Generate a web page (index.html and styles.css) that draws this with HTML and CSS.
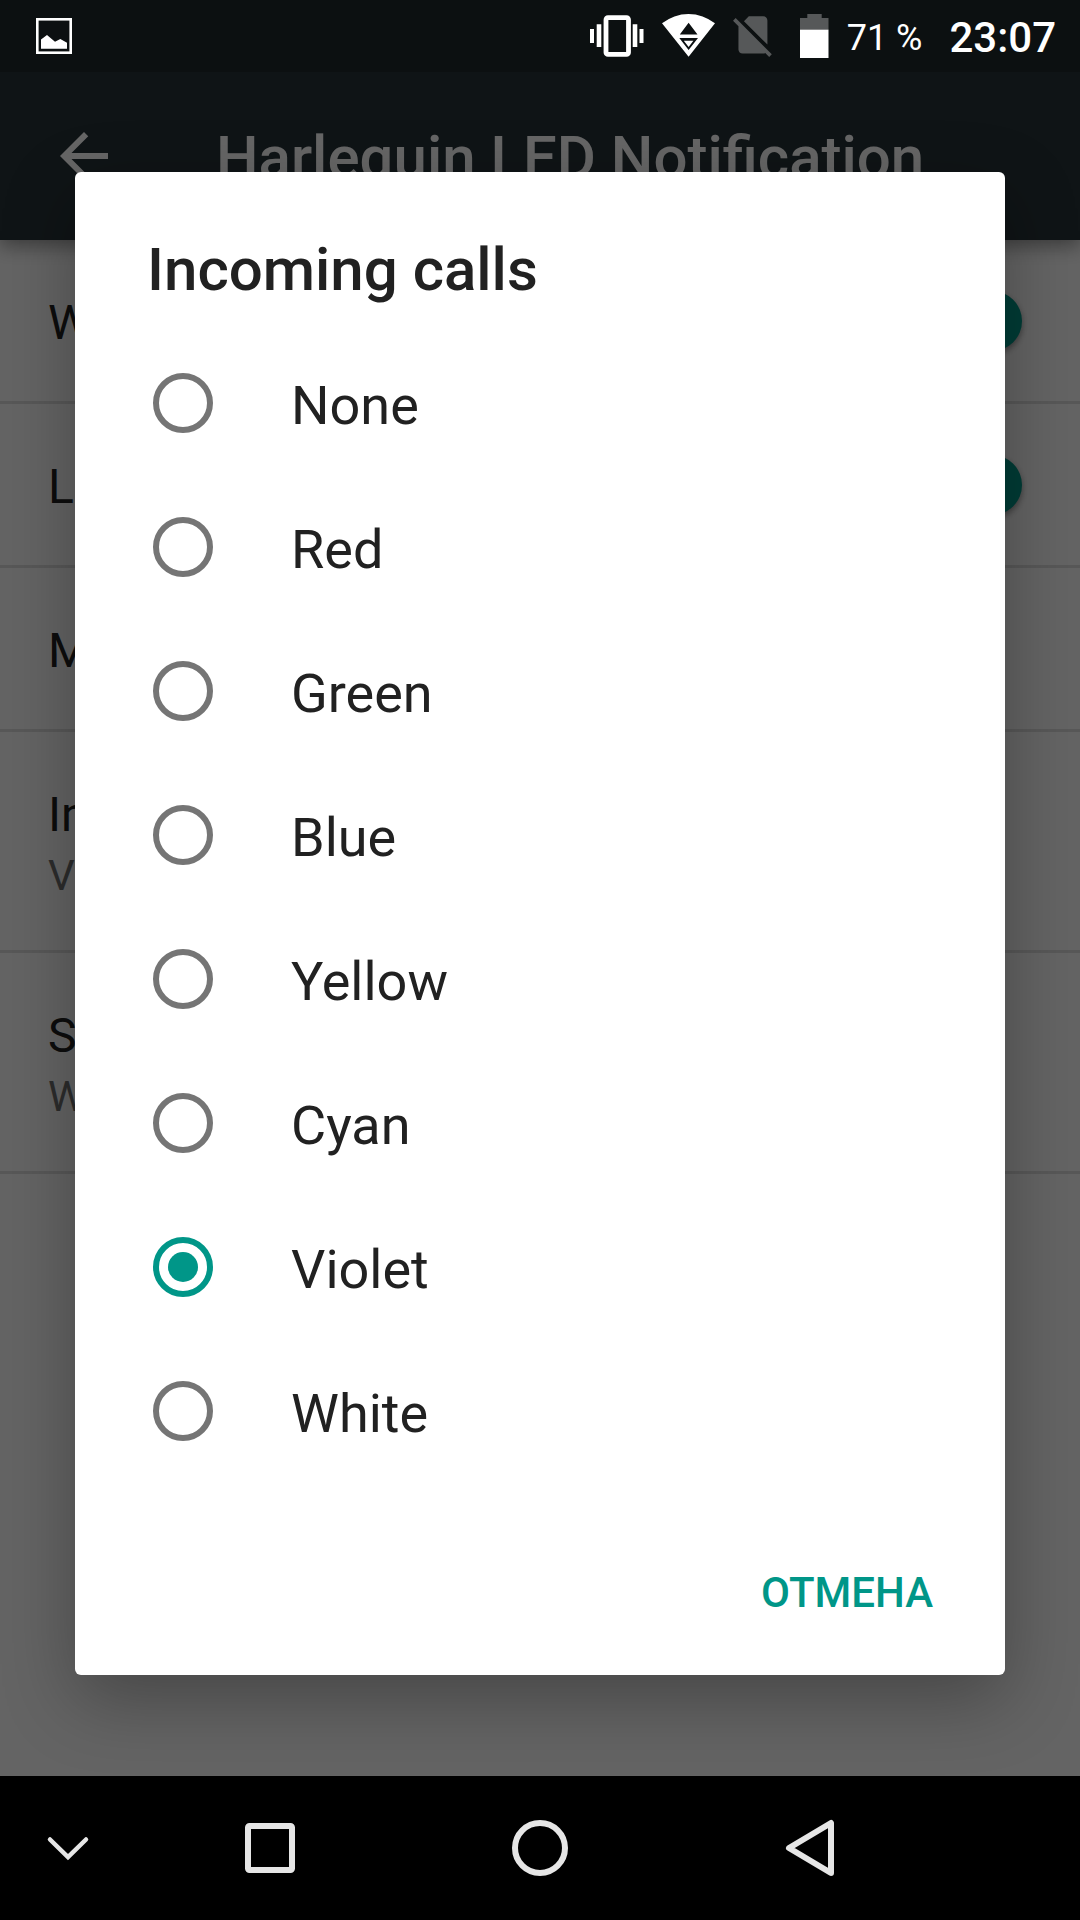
FILE: index.html
```html
<!DOCTYPE html>
<html lang="en">
<head>
  <meta charset="utf-8">
  <meta name="viewport" content="width=device-width, initial-scale=1">
  <title>Harlequin LED Notification</title>
  <link rel="stylesheet" href="styles.css">
</head>
<body>
  <div class="status-bar">
    <svg class="status-picture" width="36" height="36" viewBox="0 0 36 36" aria-hidden="true">
      <rect x="1.3" y="1.3" width="33.4" height="33.4" fill="none" stroke="#fff" stroke-width="2.6"/>
      <path fill="#fff" d="M5 30.7v-9.2l6-4.5 8 6.7 5.300-2.700 6.700 3.700v6z"/>
    </svg>
    <div class="status-icons">
      <svg width="54" height="48" viewBox="0 0 54 48" aria-hidden="true">
        <rect x="16" y="5.700" width="22.500" height="36.700" rx="2" fill="none" stroke="#fff" stroke-width="4.800"/>
        <path fill="#fff" d="M0 17h4v14H0zM6.700 12.300h4.600V35H6.700zM42.700 12.300h4.600V35h-4.600zM49.500 17h4v14h-4z"/>
      </svg>
      <svg width="53" height="48" viewBox="0 0 53 48" aria-hidden="true">
        <path fill="#fff" fill-rule="evenodd" d="M0 11.300A42.400 42.400 0 0 1 53 11.300L26.600 44.700zM26.600 10.700L17.800 22.500h17.700zM17.300 26h18.700l-9.400 12zM21.800 28.800h9.600l-4.800 6.200z"/>
      </svg>
      <svg width="40" height="48" viewBox="2.380 0.920 19.300 23.200" aria-hidden="true">
        <path fill="#565859" d="M18.990 5c0-1.100-.89-2-1.990-2h-7L7.660 5.340 19 16.680 18.990 5zM3.650 3.880L2.380 5.150 5 7.770V19c0 1.100.9 2 2 2h10.010c.35 0 .67-.1.96-.26l1.880 1.880 1.270-1.270L3.650 3.880z"/>
      </svg>
      <svg class="status-battery" width="29" height="48" viewBox="0 0 29 48" aria-hidden="true">
        <path fill="#565859" d="M7.300 2h14.400v4H28.500v12H0V6h7.300z"/>
        <path fill="#fff" d="M0 17.700h28.500V46H0z"/>
      </svg>
      <span class="status-level">71 %</span>
      <span class="status-clock">23:07</span>
    </div>
  </div>

  <header class="toolbar">
    <button class="toolbar-back" type="button" aria-label="Back">
      <svg width="72" height="72" viewBox="0 0 24 24" aria-hidden="true">
        <path fill="currentColor" d="M20 11H7.830l5.590-5.590L12 4l-8 8 8 8 1.410-1.410L7.830 13H20z"/>
      </svg>
    </button>
    <h1 class="toolbar-title">Harlequin LED Notification</h1>
  </header>

  <main class="settings">
    <label class="setting">
      <span class="setting-name">Work</span>
      <input class="switch" type="checkbox" checked>
    </label>
    <label class="setting">
      <span class="setting-name">LED</span>
      <input class="switch" type="checkbox" checked>
    </label>
    <div class="setting">
      <span class="setting-name">Missed</span>
    </div>
    <div class="setting setting-tall">
      <span class="setting-name">Incoming</span>
      <span class="setting-value">Violet</span>
    </div>
    <div class="setting setting-tall">
      <span class="setting-name">SMS</span>
      <span class="setting-value">White</span>
    </div>
  </main>

  <nav class="nav-bar">
    <button class="nav-button" type="button" aria-label="Hide">
      <svg width="48" height="36" viewBox="0 0 48 36" aria-hidden="true">
        <path fill="none" stroke="#e6e6e6" stroke-width="4.500" stroke-linecap="round" d="M6 9.500L24 27 42 9.500"/>
      </svg>
    </button>
    <button class="nav-button" type="button" aria-label="Recent apps">
      <svg width="60" height="60" viewBox="0 0 60 60" aria-hidden="true">
        <rect x="8" y="8" width="44" height="44" rx="1.500" fill="none" stroke="#e6e6e6" stroke-width="6"/>
      </svg>
    </button>
    <button class="nav-button" type="button" aria-label="Home">
      <svg width="60" height="60" viewBox="0 0 60 60" aria-hidden="true">
        <circle cx="30" cy="30" r="25" fill="none" stroke="#e6e6e6" stroke-width="6"/>
      </svg>
    </button>
    <button class="nav-button" type="button" aria-label="Back">
      <svg width="60" height="60" viewBox="0 0 60 60" aria-hidden="true">
        <path fill="none" stroke="#e6e6e6" stroke-width="6" stroke-linejoin="round" d="M51 5v50L9 30z"/>
      </svg>
    </button>
  </nav>

  <div class="overlay">
    <form class="dialog" role="dialog" aria-labelledby="dialog-title">
      <h2 class="dialog-title" id="dialog-title">Incoming calls</h2>
      <div class="options" role="radiogroup" aria-labelledby="dialog-title">
        <label class="option"><input class="radio" type="radio" name="color"><span class="option-text">None</span></label>
        <label class="option"><input class="radio" type="radio" name="color"><span class="option-text">Red</span></label>
        <label class="option"><input class="radio" type="radio" name="color"><span class="option-text">Green</span></label>
        <label class="option"><input class="radio" type="radio" name="color"><span class="option-text">Blue</span></label>
        <label class="option"><input class="radio" type="radio" name="color"><span class="option-text">Yellow</span></label>
        <label class="option"><input class="radio" type="radio" name="color"><span class="option-text">Cyan</span></label>
        <label class="option"><input class="radio" type="radio" name="color" checked><span class="option-text">Violet</span></label>
        <label class="option"><input class="radio" type="radio" name="color"><span class="option-text">White</span></label>
      </div>
      <div class="dialog-actions">
        <button class="dialog-button" type="button" lang="ru">ОТМЕНА</button>
      </div>
    </form>
  </div>
</body>
</html>
```
FILE: styles.css
```css
* {
  box-sizing: border-box;
}

body {
  display: flex;
  flex-direction: column;
  min-height: 100vh;
  margin: 0;
  background: #fafafa;
  color: #212121;
  font-family: Roboto, "Noto Sans", sans-serif;
}

button {
  padding: 0;
  border: 0;
  background: none;
  color: inherit;
  font: inherit;
}

svg {
  display: block;
}

/* System bars stay above the dimmed app */
.status-bar {
  position: relative;
  z-index: 2;
  display: flex;
  align-items: center;
  justify-content: space-between;
  height: 72px;
  padding: 0 24px 0 36px;
  background: #0c1011;
  color: #fff;
}

.status-icons {
  display: flex;
  align-items: center;
  gap: 18px;
}

.status-battery {
  margin-left: 9px;
}

.status-level {
  padding-top: 4px;
  font-size: 36px;
  line-height: 42px;
}

.status-clock {
  padding-top: 4px;
  margin-left: 9px;
  font-size: 42px;
  font-weight: 500;
  line-height: 48px;
}

.nav-bar {
  position: relative;
  z-index: 2;
  display: grid;
  grid-template-columns: 1fr 2fr 2fr 2fr 1fr;
  height: 144px;
  background: #000;
}

.nav-button {
  display: grid;
  place-items: center;
}

/* App screen */
.toolbar {
  position: relative;
  display: flex;
  align-items: center;
  gap: 96px;
  height: 168px;
  padding: 0 48px;
  background: #263238;
  box-shadow: 0 6px 18px rgba(0, 0, 0, 0.4);
  color: #fff;
}

.toolbar-title {
  margin: 0;
  padding-top: 4px;
  font-size: 60px;
  font-weight: 500;
  line-height: 72px;
  white-space: nowrap;
}

.settings {
  flex: 1;
}

.setting {
  display: flex;
  align-items: center;
  justify-content: space-between;
  height: 164px;
  padding: 0 58px 0 48px;
  border-bottom: 3px solid #dcdcdc;
}

.setting-tall {
  flex-direction: column;
  align-items: flex-start;
  justify-content: center;
  height: 221px;
  padding-top: 2px;
}

.setting-name {
  padding-top: 4px;
  font-size: 48px;
  line-height: 60px;
}

.setting-value {
  padding-top: 4px;
  color: #6e6e6e;
  font-size: 42px;
  line-height: 54px;
}

.switch {
  appearance: none;
  width: 60px;
  height: 60px;
  margin: 0;
  border-radius: 50%;
  background: #009688;
  box-shadow: 0 3px 6px rgba(0, 0, 0, 0.4);
}

/* Modal dialog */
.overlay {
  position: absolute;
  inset: 0;
  z-index: 1;
  display: flex;
  flex-direction: column;
  justify-content: center;
  padding: 72px 75px 145px;
  overflow: hidden;
  background: rgba(0, 0, 0, 0.6);
}

.dialog {
  padding: 62px 0 12px;
  border-radius: 6px;
  background: #fff;
  box-shadow: 0 24px 72px rgba(0, 0, 0, 0.3);
}

.dialog-title {
  margin: 0 72px 25px;
  font-size: 60px;
  font-weight: 500;
  line-height: 72px;
}

.option {
  display: flex;
  align-items: center;
  gap: 78px;
  height: 144px;
  padding: 0 78px;
}

.option-text {
  padding-top: 6px;
  font-size: 54px;
  line-height: 66px;
}

.radio {
  display: grid;
  place-items: center;
  appearance: none;
  width: 60px;
  height: 60px;
  margin: 0;
  border: 6px solid #757575;
  border-radius: 50%;
}

.radio:checked {
  border-color: #009688;
}

.radio:checked::before {
  content: "";
  width: 30px;
  height: 30px;
  border-radius: 50%;
  background: #009688;
}

.dialog-actions {
  display: flex;
  justify-content: flex-end;
  padding: 36px 72px 0;
}

.dialog-button {
  height: 144px;
  padding-top: 2px;
  color: #009688;
  font-size: 42px;
  font-weight: 500;
}
```
